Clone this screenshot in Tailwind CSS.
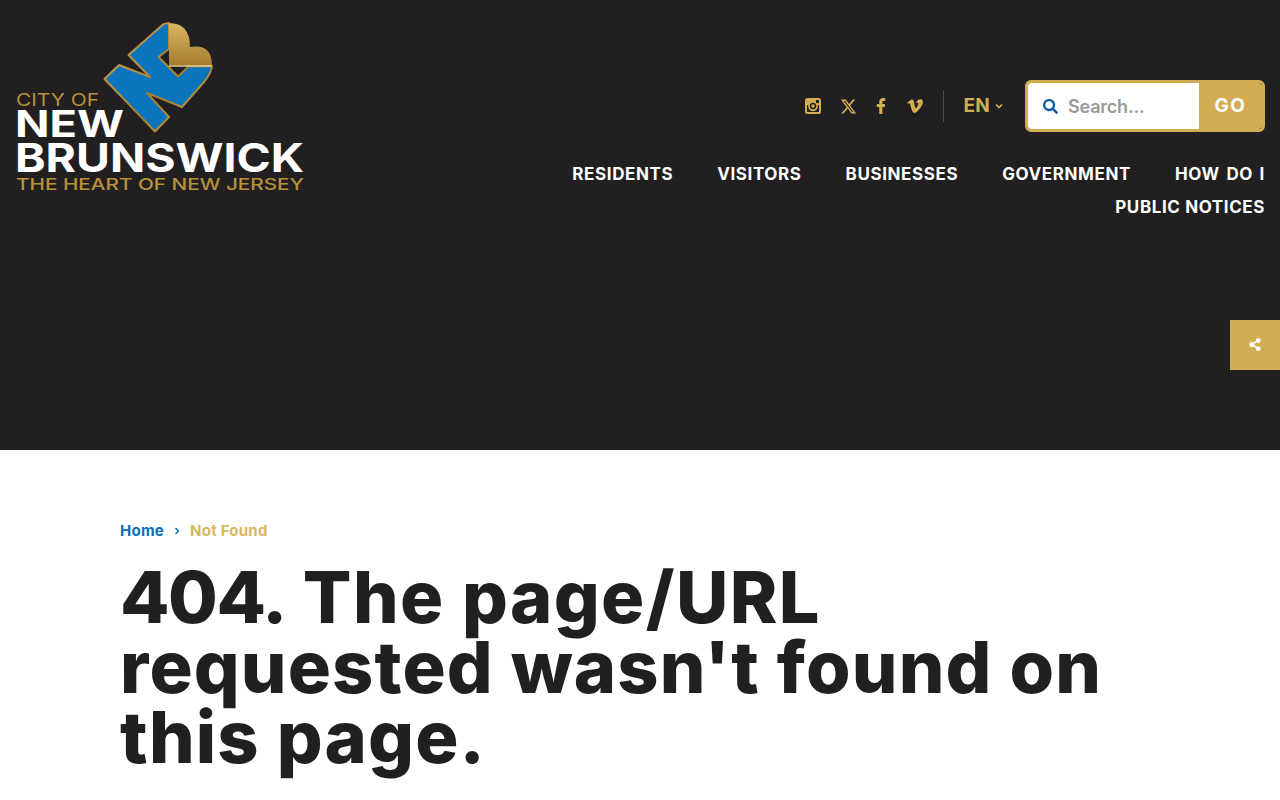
<!DOCTYPE html>
<html lang="en">
<head>
    <meta charset="UTF-8">
    <meta name="viewport" content="width=device-width, initial-scale=1.0">
    <title>Page Not Found - City of New Brunswick</title>
    <script src="https://cdn.jsdelivr.net/npm/@tailwindcss/browser@4"></script>
</head>
<body class="bg-white font-['Inter',sans-serif] text-[#211f20] overflow-hidden">
    <!-- Header -->
    <header class="relative h-[450px] bg-[#211f20] flex justify-between items-start pr-[15px]">
        <a href="#" class="block shrink-0">
            <svg width="320" height="200" viewBox="0 0 320 200" class="block">
                <defs>
                    <linearGradient id="heartFill" x1="0" y1="0" x2="0" y2="1">
                        <stop offset="0" stop-color="#d9b662"/>
                        <stop offset="1" stop-color="#a57c2c"/>
                    </linearGradient>
                    <linearGradient id="edge" x1="0" y1="0" x2="1" y2="1">
                        <stop offset="0" stop-color="#c9a85c"/>
                        <stop offset="0.6" stop-color="#a47c2c"/>
                        <stop offset="1" stop-color="#c9a85c"/>
                    </linearGradient>
                </defs>
                <!-- Logo mark -->
                <path d="M104.500 79 L119 65 L150 77 L128.500 55 L163 24.500 Q166 23 169 23 L169 49 L158.500 57 L178 76.500 L188.500 66.500 L212 66 Q211 74 204 82 L182 107 L147 93 L169 117 L155 131.500 Z" fill="#0a75bd" stroke="url(#edge)" stroke-width="2" stroke-linejoin="round"/>
                <path d="M169 23 Q190 23 190 47 Q212 43 212 65.500 L169 65.500 Z" fill="url(#heartFill)"/>
                <path d="M169 66 L212 66" stroke="#e4cf94" stroke-width="1.500"/>
                <text x="16" y="106" textLength="83" lengthAdjust="spacingAndGlyphs" font-size="17" class="fill-[#b8923a] font-normal">CITY OF</text>
                <text x="15" y="137" textLength="109" lengthAdjust="spacingAndGlyphs" font-size="37" class="fill-white font-bold">NEW</text>
                <text x="15" y="172" textLength="289" lengthAdjust="spacingAndGlyphs" font-size="40" class="fill-white font-bold">BRUNSWICK</text>
                <text x="16" y="190" textLength="288" lengthAdjust="spacingAndGlyphs" font-size="16" class="fill-[#b8923a] font-medium">THE HEART OF NEW JERSEY</text>
            </svg>
        </a>

        <div class="flex flex-col items-end pt-[80px]">
            <!-- Social, language, search -->
            <div class="flex items-center h-[52px]">
                <div class="flex items-center text-[#d3ad52]">
                    <svg width="16" height="16" viewBox="0 0 16 16" class="fill-current"><path fill-rule="evenodd" d="M2.500 0h11A2.500 2.500 0 0 1 16 2.500v11a2.500 2.500 0 0 1-2.500 2.500h-11A2.500 2.500 0 0 1 0 13.500v-11A2.500 2.500 0 0 1 2.500 0zM11 2v3h3V2zM8 4.800A3.200 3.200 0 1 0 8 11.200 3.200 3.200 0 0 0 8 4.800zM8 6.200A1.800 1.800 0 1 1 8 9.800 1.800 1.800 0 0 1 8 6.200zM2 7v6.500a.5.5 0 0 0 .5.5h11a.5.5 0 0 0 .5-.5V7h-1.300a4.900 4.900 0 1 1-9.400 0z"/></svg>
                    <svg width="17" height="17" viewBox="0 0 512 512" class="fill-current ml-[19px]"><path d="M389.200 48h70.600L305.600 224.200 487 464H345L233.700 318.600 106.500 464H35.800L200.700 275.500 26.800 48H172.400L272.900 180.900 389.200 48zM364.400 421.800h39.100L151.100 88h-42L364.400 421.800z"/></svg>
                    <svg width="10" height="16" viewBox="0 0 320 512" class="fill-current ml-[19px]"><path d="M279.140 288l14.220-92.660h-88.910v-60.130c0-25.350 12.420-50.060 52.240-50.060h40.420V6.260S260.430 0 225.360 0c-73.220 0-121.080 44.380-121.080 124.720v70.620H22.890V288h81.390v224h100.170V288z"/></svg>
                    <svg width="16" height="18" viewBox="0 0 448 512" class="fill-current ml-[21px]"><path d="M447.800 153.600c-2 43.600-32.400 103.300-91.400 179.100-60.900 79.200-112.400 118.800-154.600 118.800-26.100 0-48.200-24.100-66.300-72.300C100.300 250 85.300 174.300 56.200 174.300c-3.400 0-15.100 7.100-35.200 21.100L0 168.200c51.600-45.300 100.900-95.700 131.800-98.500 34.900-3.400 56.300 20.500 64.400 71.500 28.700 181.500 41.400 208.900 93.600 126.700 18.700-29.600 28.800-52.100 30.200-67.600 4.800-45.900-35.800-42.800-63.300-31 22-72.100 64.100-107.100 126.200-105.100 45.800 1.200 67.500 31.100 64.900 89.400z"/></svg>
                </div>
                <div class="w-px h-[32px] bg-[#5a4c2c] ml-[20px]"></div>
                <div class="flex items-center ml-[19px] text-[#d3ad52] text-[19px] font-bold tracking-[0.3px]">
                    EN
                    <svg width="8" height="6" viewBox="0 0 8 6" class="ml-[5px] stroke-current fill-none" stroke-width="1.600"><path d="M1 1.500 L4 4.500 L7 1.500"/></svg>
                </div>
                <form class="flex w-[240px] h-[52px] ml-[22px] border-[3px] border-[#d3ad52] rounded-md overflow-hidden">
                    <div class="flex-1 bg-white flex items-center pl-[15px]">
                        <svg width="15" height="15" viewBox="0 0 512 512" class="fill-[#0d5fa3]"><path d="M505 442.700L405.300 343c-4.500-4.500-10.600-7-17-7H372c27.600-35.300 44-79.700 44-128C416 93.100 322.900 0 208 0S0 93.100 0 208s93.100 208 208 208c48.300 0 92.700-16.400 128-44v16.300c0 6.400 2.500 12.500 7 17l99.700 99.700c9.400 9.400 24.600 9.400 33.900 0l28.300-28.300c9.400-9.400 9.400-24.600.1-34zM208 336c-70.700 0-128-57.200-128-128 0-70.700 57.200-128 128-128 70.700 0 128 57.200 128 128 0 70.700-57.200 128-128 128z"/></svg>
                        <span class="ml-[10px] text-[18px] font-semibold text-[#9a9a9a] tracking-[-0.2px]">Search...</span>
                    </div>
                    <div class="w-[63px] bg-[#d3ad52] flex items-center justify-center text-white text-[19px] font-bold tracking-[1.500px]">GO</div>
                </form>
            </div>

            <!-- Main nav -->
            <nav class="flex flex-col items-end mt-[26px] text-white text-[17px] font-bold leading-[33px] tracking-[0.6px]">
                <div class="flex gap-[44px]">
                    <a href="#" class="whitespace-nowrap">RESIDENTS</a>
                    <a href="#" class="whitespace-nowrap">VISITORS</a>
                    <a href="#" class="whitespace-nowrap">BUSINESSES</a>
                    <a href="#" class="whitespace-nowrap">GOVERNMENT</a>
                    <a href="#" class="whitespace-nowrap [word-spacing:2px]">HOW DO I</a>
                </div>
                <a href="#" class="whitespace-nowrap">PUBLIC NOTICES</a>
            </nav>
        </div>

        <!-- Share tab -->
        <button class="absolute right-0 top-[320px] w-[50px] h-[50px] bg-[#d3ad52] flex items-center justify-center">
            <svg width="12" height="13" viewBox="0 0 448 512" class="fill-white mb-[1px] mr-[1px]"><path d="M352 320c-22.608 0-43.387 7.819-59.790 20.895l-102.486-64.054a96.551 96.551 0 0 0 0-41.683l102.486-64.054C308.613 184.181 329.392 192 352 192c53.019 0 96-42.981 96-96S405.019 0 352 0s-96 42.981-96 96c0 7.158.79 14.130 2.276 20.841L155.790 180.895C139.387 167.819 118.608 160 96 160c-53.019 0-96 42.981-96 96s42.981 96 96 96c22.608 0 43.387-7.819 59.790-20.895l102.486 64.054A96.301 96.301 0 0 0 256 416c0 53.019 42.981 96 96 96s96-42.981 96-96-42.981-96-96-96z"/></svg>
        </button>
    </header>

    <!-- Content -->
    <main class="px-[120px] pt-[71px] pb-[40px]">
        <div class="flex items-center text-[15px] font-bold leading-[20px] tracking-[0.25px]">
            <a href="#" class="text-[#0a71b5]">Home</a>
            <svg width="6" height="8" viewBox="0 0 6 8" class="mx-[10px] stroke-[#0a71b5] fill-none" stroke-width="1.500"><path d="M1.500 1 L4.500 4 L1.500 7"/></svg>
            <span class="text-[#dab75f]">Not Found</span>
        </div>
        <h1 class="mt-[21px] text-[72px] font-extrabold leading-[70px] tracking-[1.15px]"><span class="tracking-[-1.500px]">404.</span> <span class="tracking-[1.400px]">The page/URL</span> requested wasn't found on this page.</h1>
    </main>
</body>
</html>
